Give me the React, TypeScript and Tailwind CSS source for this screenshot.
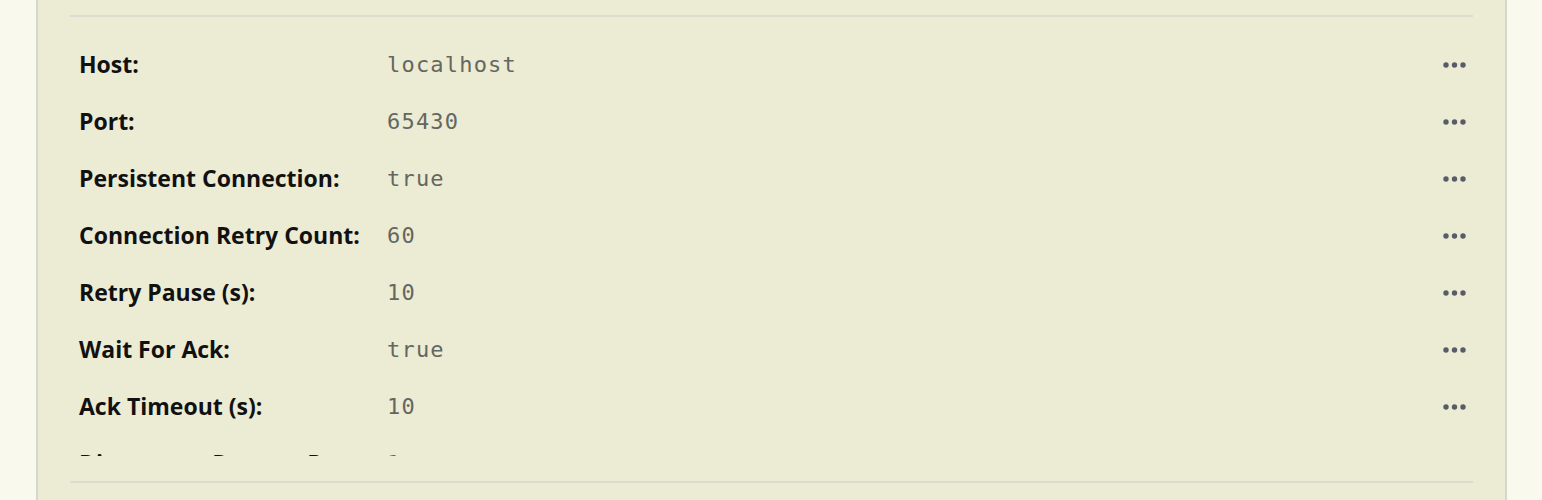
import React from "react";

const rows: [string, string][] = [
  ["Host:", "localhost"],
  ["Port:", "65430"],
  ["Persistent Connection:", "true"],
  ["Connection Retry Count:", "60"],
  ["Retry Pause (s):", "10"],
  ["Wait For Ack:", "true"],
  ["Ack Timeout (s):", "10"],
  ["Disconnect Remote Port:", "1"],
];

function Dots() {
  return (
    <svg width="24" height="6" viewBox="0 0 24 6" className="block">
      <circle cx="3" cy="3" r="2.7" fill="#575d67" />
      <circle cx="11.5" cy="3" r="2.7" fill="#575d67" />
      <circle cx="20" cy="3" r="2.7" fill="#575d67" />
    </svg>
  );
}

export default function App() {
  return (
    <div className="w-[1542px] h-[500px] bg-[#f9f9ee] pl-[36px] overflow-hidden">
      <div className="w-[1471px] h-[500px] bg-[#ecebd4] border-l-2 border-r-2 border-[#d6d6d0] px-[32px] flex flex-col">
        <div className="h-[15px] shrink-0" />
        <div className="h-[2px] bg-[#dcdcd2] shrink-0" />
        <div className="h-[439px] overflow-hidden shrink-0 pt-[19px]">
          {rows.map(([label, value]) => (
            <div key={label} className="h-[57px] grid grid-cols-[308px_1fr_auto] items-center pl-[9px] pr-[6px]">
              <span className="font-['Open_Sans',sans-serif] font-bold text-[23px] text-[#111111] whitespace-nowrap">
                {label}
              </span>
              <span className="font-['DejaVu_Sans_Mono',monospace] text-[22px] text-[#646660] tracking-[1.2px]">
                {value}
              </span>
              <Dots />
            </div>
          ))}
        </div>
        <div className="h-[25px] shrink-0" />
        <div className="h-[2px] bg-[#dcdcd2] shrink-0" />
      </div>
    </div>
  );
}
